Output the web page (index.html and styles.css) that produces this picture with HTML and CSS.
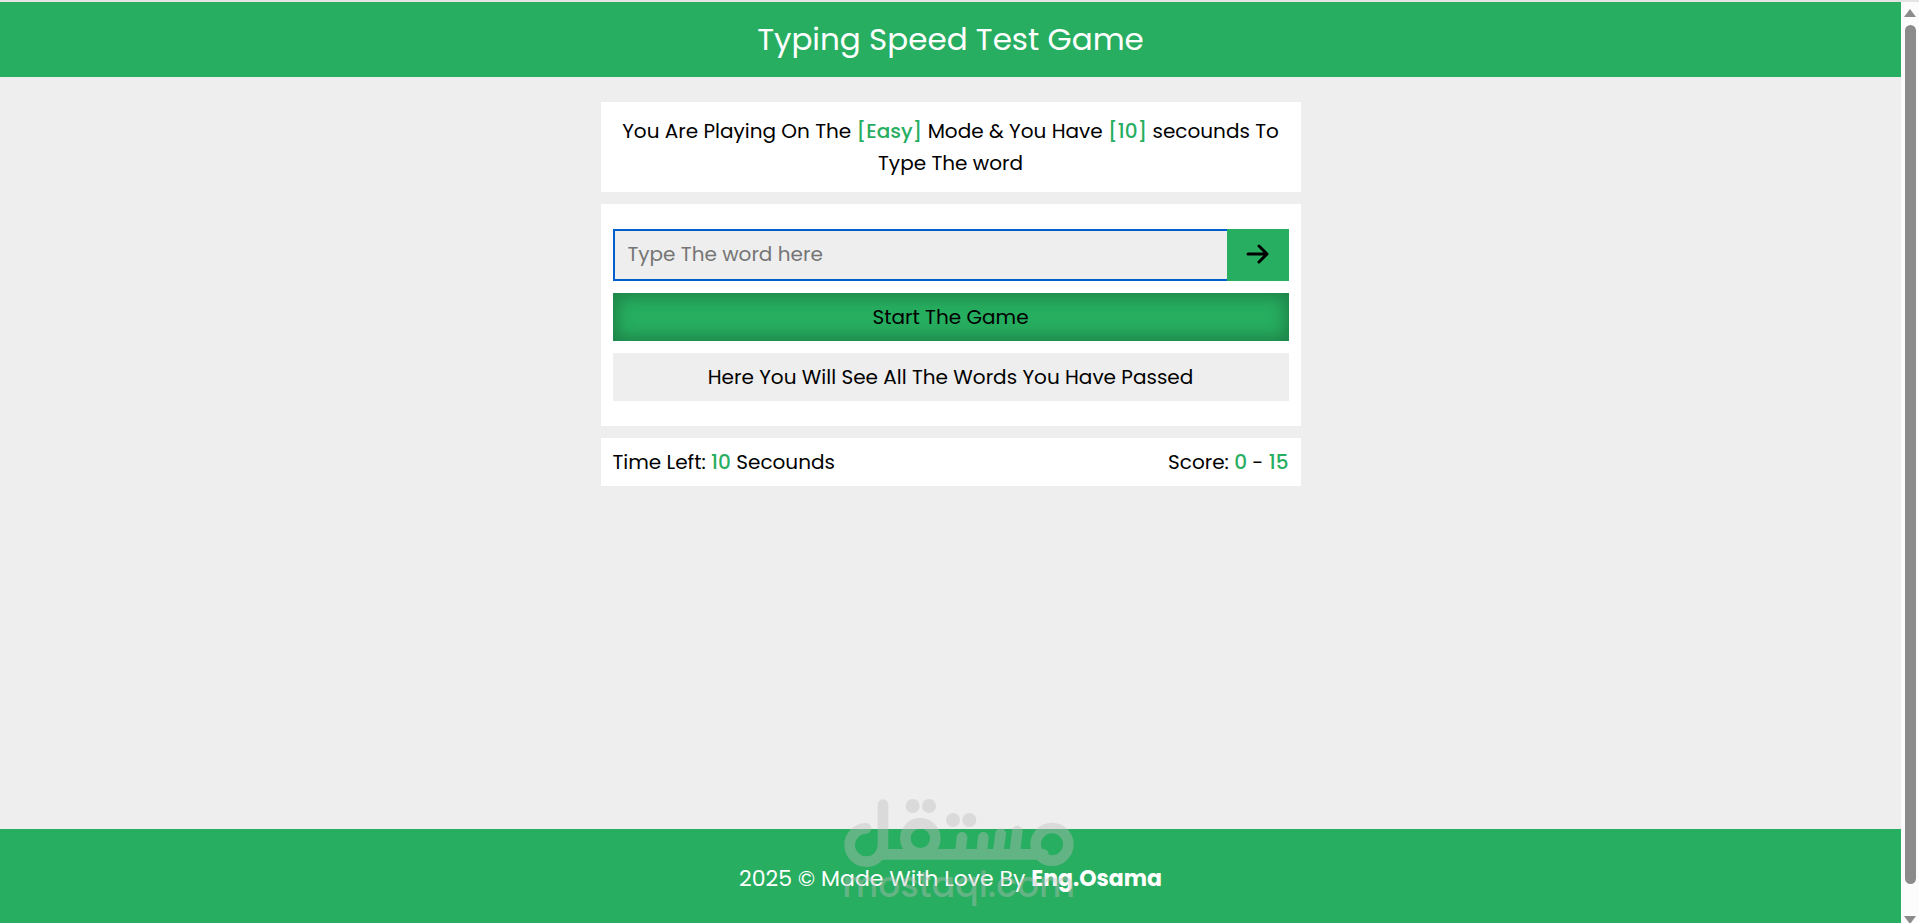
FILE: index.html
```html
<!DOCTYPE html>
<html lang="en">
<head>
<meta charset="utf-8">
<meta name="viewport" content="width=device-width, initial-scale=1">
<title>Typing Speed Test Game</title>
<link rel="stylesheet" href="styles.css">
</head>
<body>
<div class="page">
  <header class="title">Typing Speed Test Game</header>
  <main class="container">
    <section class="message">You Are Playing On The <span class="accent">[Easy]</span> Mode &amp; You Have <span class="accent">[10]</span> secounds To Type The word</section>
    <section class="play">
      <form class="entry">
        <input class="input" type="text" placeholder="Type The word here" aria-label="Type the word here">
        <button class="submit" type="button" aria-label="Submit word">
          <svg class="arrow" viewBox="0 0 22 20" aria-hidden="true"><path d="M1.500 10H20M12.500 2L20.500 10L12.500 18"/></svg>
        </button>
      </form>
      <button class="start" type="button">Start The Game</button>
      <div class="words">Here You Will See All The Words You Have Passed</div>
    </section>
    <section class="control">
      <div>Time Left: <span class="accent">10</span> Secounds</div>
      <div>Score: <span class="accent">0</span> - <span class="accent">15</span></div>
    </section>
  </main>
  <footer class="footer">2025 © Made With Love By <strong>Eng.Osama</strong></footer>
</div>
<div class="scrollbar" aria-hidden="true">
  <svg class="scroll-arrow" viewBox="0 0 14 10"><path d="M7 1L13 9H1Z"/></svg>
  <div class="thumb"></div>
  <svg class="scroll-arrow scroll-down" viewBox="0 0 14 8"><path d="M7 9L13 1H1Z"/></svg>
</div>
<svg class="watermark" viewBox="0 0 780 399" aria-hidden="true">
  <g class="mark">
    <path class="line" d="M159 44V163A50 50 0 1 1 108 115M150 193H640"/>
    <circle class="line" cx="666" cy="163" r="49"/>
    <circle class="line" cx="271" cy="145" r="45"/>
    <path class="line" d="M391 190L396 142M455 190L460 142M504 190L512 131M554 190L562 123"/>
    <circle cx="248" cy="48" r="21"/><circle cx="297" cy="48" r="21"/>
    <circle cx="369" cy="90" r="21"/><circle cx="418" cy="90" r="21"/>
    <text class="mark-text" x="386" y="320">mostaql.com</text>
  </g>
</svg>
</body>
</html>
```
FILE: styles.css
```css
* { box-sizing: border-box; }
html { height: 100%; overflow: hidden; }
body {
  margin: 0;
  height: 100%;
  display: grid;
  grid-template-columns: minmax(0, 1fr) 18px;
  grid-template-rows: 100%;
  font-family: Poppins, Inter, sans-serif;
  font-size: 20px;
  line-height: 32px;
  color: #000;
  background: #eee;
}
button, input { font: inherit; color: inherit; border: 0; border-radius: 0; margin: 0; }
.page {
  display: flex;
  flex-direction: column;
  border-top: 2px solid #e4e4e4;
}
.title {
  padding: 13px 24px 14px;
  background: #27ae60;
  color: #fff;
  text-align: center;
  font-size: 31px;
  line-height: 48px;
}
.container {
  width: 100%;
  max-width: 700px;
  margin: 25px auto;
  flex: 1;
  display: flex;
  flex-direction: column;
  gap: 12px;
}
.message, .play, .control { background: #fff; }
.message { padding: 13px 12px; text-align: center; }
.accent { color: #27ae60; font-weight: 500; }
.play {
  padding: 25px 12px;
  display: flex;
  flex-direction: column;
  gap: 12px;
}
.entry { display: flex; }
.input {
  flex: 1;
  min-width: 0;
  height: 52px;
  padding: 0 13px 2px;
  background: #eee;
  border: 2px solid #005fcc;
  border-right: 0;
  outline: 0;
}
.input::placeholder { color: #757575; opacity: 1; }
.submit {
  width: 62px;
  padding: 0 0 2px;
  display: grid;
  place-items: center;
  background: #27ae60;
}
.arrow { width: 23px; height: 20px; fill: none; stroke: #000; stroke-width: 3; stroke-linecap: round; stroke-linejoin: round; }
.start {
  padding: 8px 12px;
  background: #27ae60;
  box-shadow: inset 0 0 15px 5px #1e8449;
}
.words { padding: 8px 12px; background: #eee; text-align: center; }
.control { padding: 8px 12px; display: flex; justify-content: space-between; }
.footer {
  padding: 34px 24px 28px;
  background: #27ae60;
  color: #fff;
  text-align: center;
  font-size: 22px;
}
.scrollbar {
  padding: 6px 2px 0;
  display: flex;
  flex-direction: column;
  align-items: center;
  gap: 7px;
  background: #fcfcfc;
  border-top: 2px solid #e4e4e4;
  overflow: hidden;
}
.thumb { width: 11px; flex: 1; border-radius: 6px; background: #8b8b8b; margin-bottom: 24px; }
.scroll-arrow { width: 14px; height: 10px; flex: none; fill: #8b8b8b; }
.scroll-down { height: 8px; }
.watermark {
  position: absolute;
  left: 50%;
  bottom: 0;
  width: 260px;
  height: 133px;
  margin-left: -130px;
  pointer-events: none;
}
.mark { opacity: 0.4; fill: #bdbdbd; }
.line { fill: none; stroke: #bdbdbd; stroke-width: 32; stroke-linecap: round; }
.mark-text { font-size: 104px; font-weight: 500; text-anchor: middle; }
```
